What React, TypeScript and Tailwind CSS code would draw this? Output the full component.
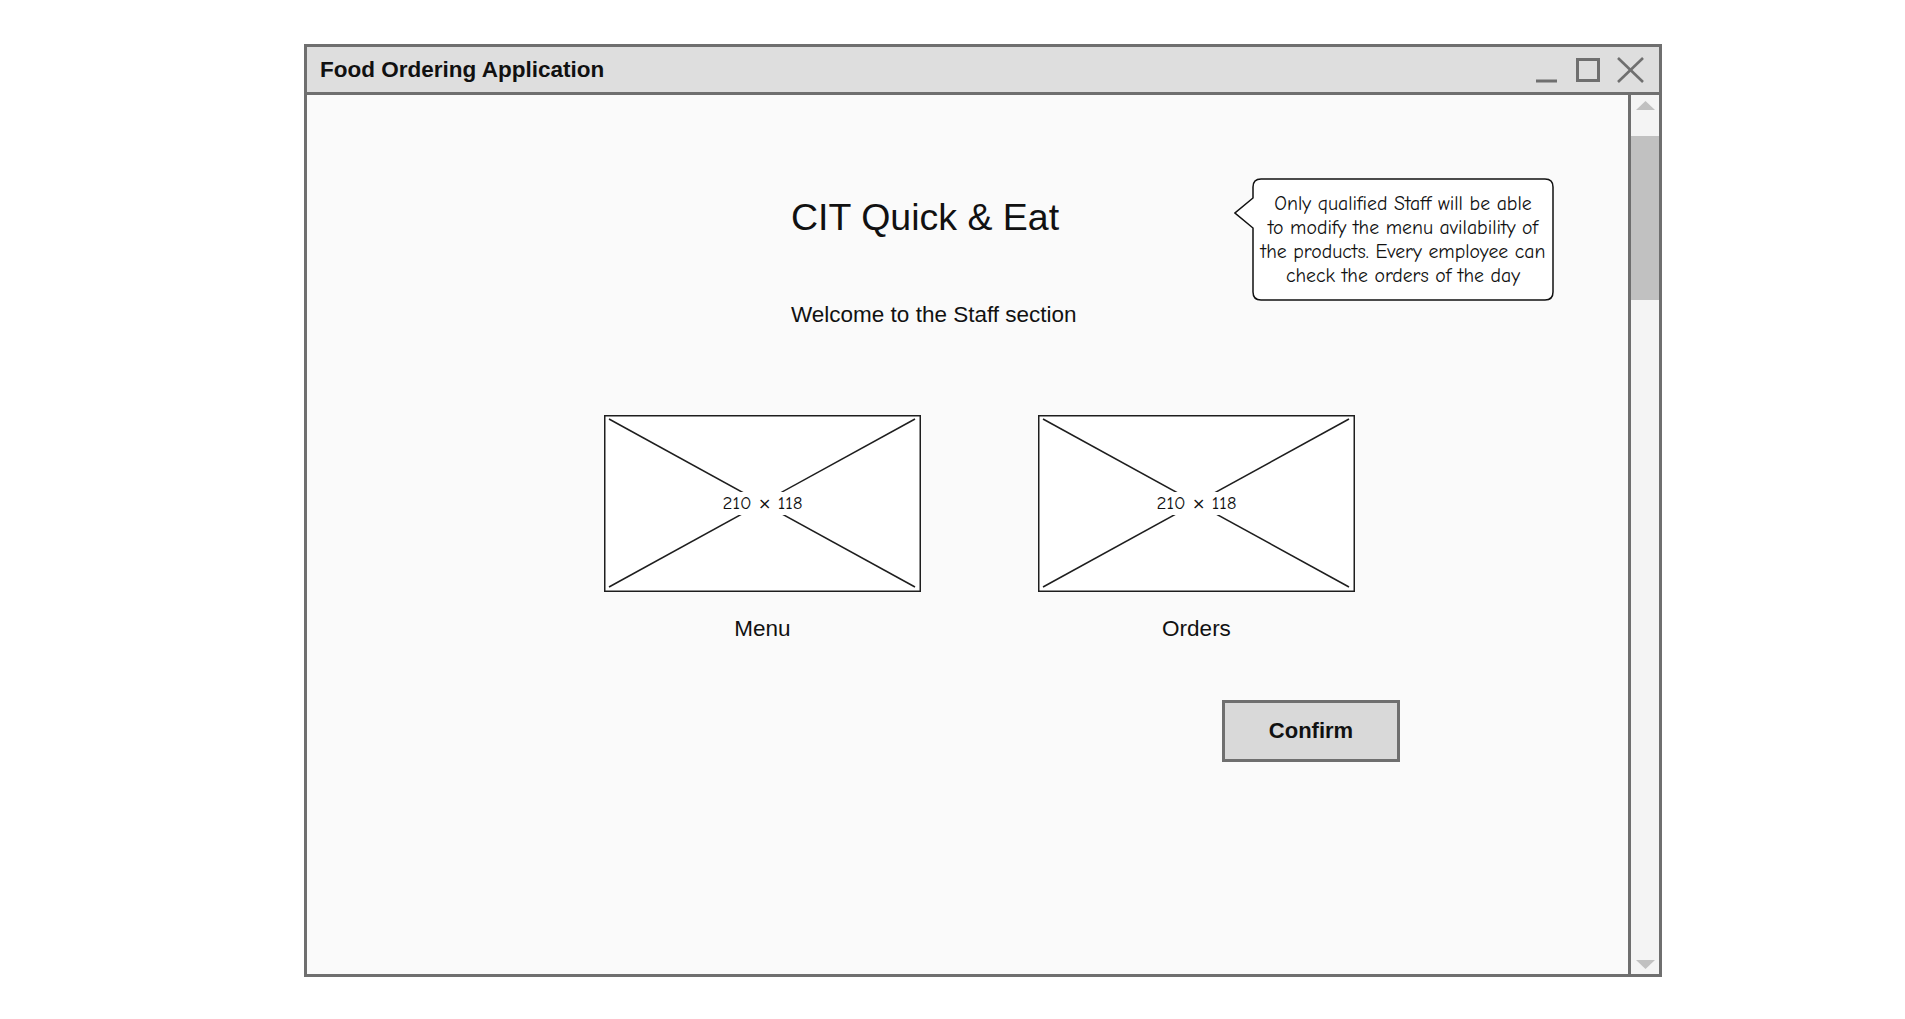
import React from "react";

const sans = { fontFamily: '"Liberation Sans", Arial, sans-serif' };
const comic = { fontFamily: '"Comic Sans MS", "Comic Neue", "Noto Sans", sans-serif' };

function Placeholder({ label }: { label: string }) {
  return (
    <div className="flex w-[317px] flex-col items-center">
      <div className="relative h-[177px] w-[317px] bg-white">
        <svg width="317" height="177" className="absolute left-0 top-0">
          <rect x="0.75" y="0.75" width="315.5" height="175.5" fill="white" stroke="#1e1e1e" strokeWidth="1.5" />
          <line x1="5" y1="4" x2="311" y2="172" stroke="#1e1e1e" strokeWidth="1.5" />
          <line x1="311" y1="4" x2="5" y2="172" stroke="#1e1e1e" strokeWidth="1.5" />
        </svg>
        <div className="absolute inset-0 flex items-center justify-center">
          <span className="bg-white px-[1px] text-[19px] leading-[22px] text-[#111]" style={comic}>
            210{" "}
            <span style={{ fontFamily: '"DejaVu Sans", sans-serif' }} className="text-[16px]">
              ×
            </span>{" "}
            118
          </span>
        </div>
      </div>
      <div className="mt-[26px] text-[22.5px] leading-[22px] text-[#111]" style={sans}>
        {label}
      </div>
    </div>
  );
}

export default function App() {
  return (
    <div className="h-[1019px] w-[1905px] overflow-hidden bg-white pt-[44px]">
      <div className="ml-[304px] flex h-[933px] w-[1358px] flex-col border-[3px] border-[#6f6f6f] bg-[#fafafa]">
        {/* Title bar */}
        <div className="flex h-[48px] shrink-0 items-center border-b-[3px] border-[#6f6f6f] bg-[#dedede] pl-[13px]">
          <span className="text-[22.5px] font-bold leading-[22px] text-[#111]" style={sans}>
            Food Ordering Application
          </span>
          <svg width="120" height="45" className="ml-auto mr-[9px]">
            <line x1="6" y1="34" x2="27" y2="34" stroke="#6f6f6f" strokeWidth="3" />
            <rect x="47.5" y="12.5" width="21" height="21" fill="none" stroke="#6f6f6f" strokeWidth="3" />
            <line x1="88" y1="11" x2="113" y2="35" stroke="#6f6f6f" strokeWidth="2.6" />
            <line x1="113" y1="11" x2="88" y2="35" stroke="#6f6f6f" strokeWidth="2.6" />
          </svg>
        </div>
        {/* Body */}
        <div className="flex min-h-0 flex-1">
          <div className="relative flex-1 bg-[#fafafa]">
            <div className="ml-[484px] mt-[104px] text-[37.5px] leading-[37px] text-[#111]" style={sans}>
              CIT Quick &amp; Eat
            </div>
            <div className="ml-[484px] mt-[68px] text-[22.5px] leading-[22px] text-[#111]" style={sans}>
              Welcome to the Staff section
            </div>
            <div className="ml-[297px] mt-[89px] flex gap-[117px]">
              <Placeholder label="Menu" />
              <Placeholder label="Orders" />
            </div>
            <button
              className="ml-[915px] mt-[60px] flex h-[62px] w-[178px] items-center justify-center border-[3px] border-[#6f6f6f] bg-[#d9d9d9] text-[22px] font-bold leading-[22px] text-[#111]"
              style={sans}
            >
              Confirm
            </button>
            {/* Callout bubble */}
            <div className="absolute left-[927px] top-[83px] h-[124px] w-[321px]">
              <svg width="321" height="124" className="absolute left-0 top-0">
                <path
                  d="M 27 1 H 311 Q 319 1 319 9 V 114 Q 319 122 311 122 H 27 Q 19 122 19 114 V 50 L 1 35 L 19 20 V 9 Q 19 1 27 1 Z"
                  fill="white"
                  stroke="#111"
                  strokeWidth="1.5"
                />
              </svg>
              <div
                className="absolute left-[19px] top-[14px] w-[300px] text-center text-[19.8px] leading-[24px] text-[#111]"
                style={comic}
              >
                Only qualified Staff will be able
                <br />
                to modify the menu avilability of
                <br />
                the products. Every employee can
                <br />
                check the orders of the day
              </div>
            </div>
          </div>
          {/* Scrollbar */}
          <div className="flex w-[31px] shrink-0 flex-col border-l-[3px] border-[#6f6f6f] bg-[#f4f4f4]">
            <div className="flex h-[41px] justify-center pt-[6px]">
              <svg width="19" height="9">
                <polygon points="9.5,0 19,9 0,9" fill="#c1c1c1" />
              </svg>
            </div>
            <div className="h-[164px] bg-[#c1c1c1]" />
            <div className="flex-1" />
            <div className="flex justify-center pb-[5px]">
              <svg width="19" height="9">
                <polygon points="0,0 19,0 9.5,9" fill="#c1c1c1" />
              </svg>
            </div>
          </div>
        </div>
      </div>
    </div>
  );
}
